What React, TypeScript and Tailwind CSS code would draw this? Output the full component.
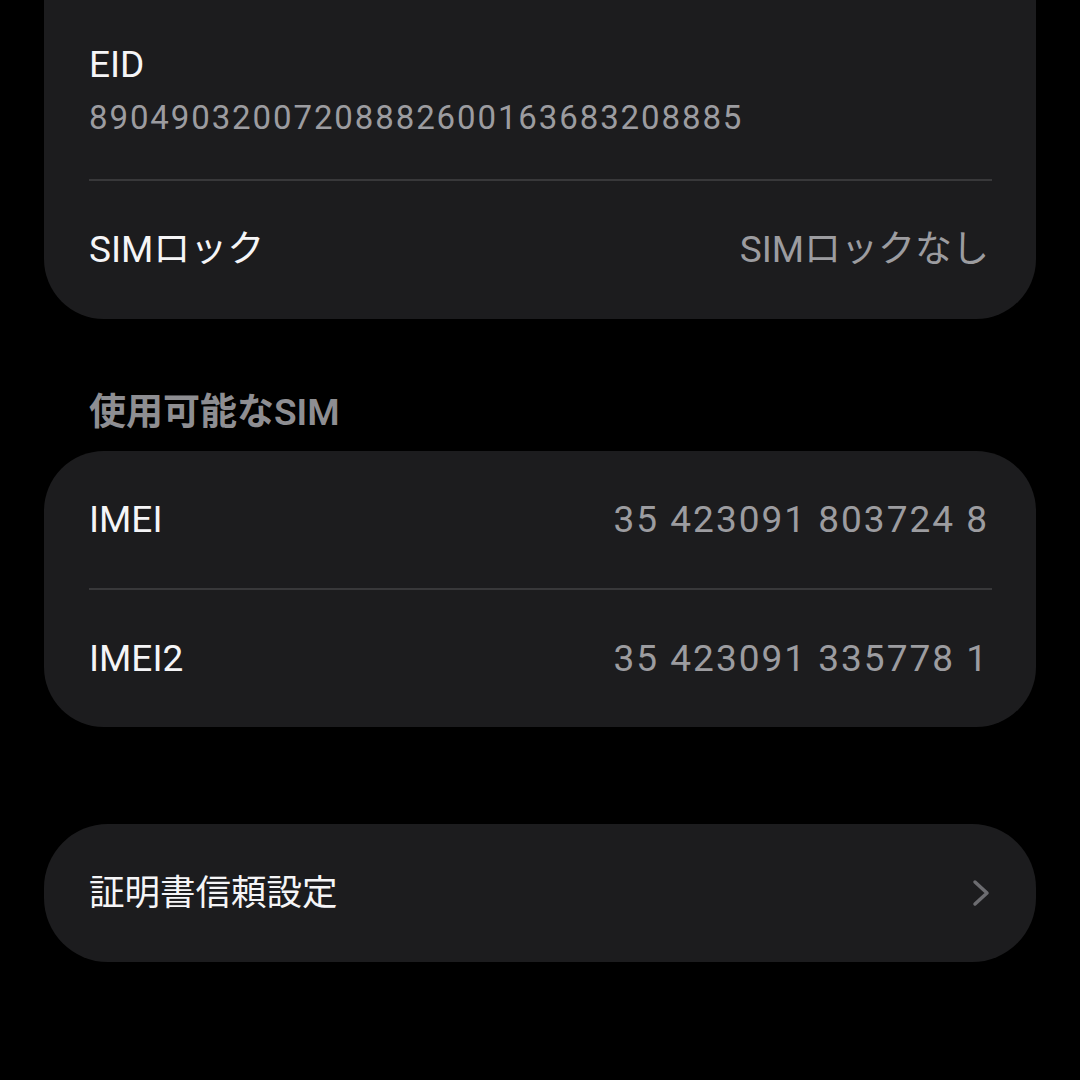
const font = { fontFamily: '"Roboto", "Noto Sans CJK JP", sans-serif' };

const Divider = () => <div className="h-[2px] bg-[#38383a] ml-[45px] mr-[44px]" />;

const ValueRow = ({ label, value, wide }: { label: string; value: string; wide?: boolean }) => (
  <div className="h-[137px] flex items-center justify-between pl-[45px] pr-[47px]">
    <span className="text-[37px] leading-[44px] text-[#f5f5f7]">{label}</span>
    <span
      className={
        wide
          ? "text-[37px] leading-[44px] text-[#9c9ca0] tracking-[2px]"
          : "text-[37px] leading-[44px] text-[#9c9ca0]"
      }
    >
      {value}
    </span>
  </div>
);

const Chevron = () => (
  <svg width="18" height="28" viewBox="0 0 18 28" fill="none">
    <path
      d="M3 3 L15 14 L3 25"
      stroke="#6c6c70"
      strokeWidth="3.5"
      strokeLinecap="round"
      strokeLinejoin="round"
    />
  </svg>
);

export default function App() {
  return (
    <div className="w-[1080px] h-[1080px] bg-black overflow-hidden" style={font}>
      <div className="mx-[44px] -mt-[60px]">
        {/* SIM card info */}
        <div className="bg-[#1c1c1e] rounded-[60px] pb-[1px]">
          <div className="pl-[45px] pr-[47px] pt-[103px] pb-[41px] flex flex-col gap-[11px]">
            <span className="text-[37px] leading-[44px] text-[#f5f5f7]">EID</span>
            <span className="text-[33px] leading-[40px] text-[#9c9ca0] tracking-[1.9px]">
              89049032007208882600163683208885
            </span>
          </div>
          <Divider />
          <ValueRow label="SIMロック" value="SIMロックなし" />
        </div>

        {/* available SIM */}
        <div className="pl-[45px] pt-[72px] pb-[16px]">
          <span className="text-[37px] leading-[44px] font-semibold text-[#8e8e92]">
            使用可能なSIM
          </span>
        </div>
        <div className="bg-[#1c1c1e] rounded-[60px]">
          <ValueRow label="IMEI" value="35 423091 803724 8" wide />
          <Divider />
          <ValueRow label="IMEI2" value="35 423091 335778 1" wide />
        </div>

        {/* certificate */}
        <div className="mt-[97px] bg-[#1c1c1e] rounded-[64px] h-[138px] flex items-center justify-between pl-[45px] pr-[46px]">
          <span className="text-[35.5px] leading-[44px] text-[#f5f5f7]">証明書信頼設定</span>
          <Chevron />
        </div>
      </div>
    </div>
  );
}
